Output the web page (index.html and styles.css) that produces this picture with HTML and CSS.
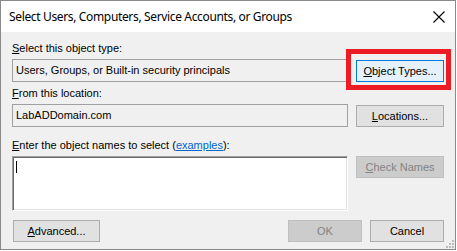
FILE: index.html
```html
<!DOCTYPE html>
<html>
<head>
<meta charset="utf-8">
<link rel="stylesheet" href="styles.css">
</head>
<body>
<div class="window">
  <div class="titlebar">
    <span class="title">Select Users, Computers, Service Accounts, or Groups</span>
    <svg class="close" width="12" height="12" viewBox="0 0 12 12"><path d="M0.5 0.5 L11.5 11.5 M11.5 0.5 L0.5 11.5" stroke="#000" stroke-width="1.1" fill="none"/></svg>
  </div>
  <div class="content">
    <div class="label l1"><u>S</u>elect this object type:</div>
    <div class="row">
      <div class="field">Users, Groups, or Built-in security principals</div>
      <button class="btn default"><u>O</u>bject Types...</button>
    </div>
    <div class="label l2"><u>F</u>rom this location:</div>
    <div class="row">
      <div class="field">LabADDomain.com</div>
      <button class="btn"><u>L</u>ocations...</button>
    </div>
    <div class="label l3"><u>E</u>nter the object names to select (<span class="link">examples</span>):</div>
    <div class="row top">
      <div class="textarea"><span class="caret"></span></div>
      <button class="btn disabled"><u>C</u>heck Names</button>
    </div>
    <div class="bottom">
      <button class="btn adv"><u>A</u>dvanced...</button>
      <div class="spacer"></div>
      <button class="btn small disabled">OK</button>
      <button class="btn small">Cancel</button>
    </div>
  </div>
  <div class="highlight"></div>
  <div class="grip">
    <i class="d1"></i><i class="d2"></i><i class="d3"></i><i class="d4"></i><i class="d5"></i><i class="d6"></i>
  </div>
</div>
</body>
</html>
```

FILE: styles.css
```css
html, body {
  margin: 0;
  padding: 0;
  background: #ffffff;
}
.window {
  position: relative;
  width: 456px;
  height: 250px;
  box-sizing: border-box;
  border: 1px solid #8a8a8a;
  background: #f0f0f0;
  font-family: "Liberation Sans", Arial, sans-serif;
  font-size: 11px;
  color: #000;
  overflow: hidden;
}
.titlebar {
  height: 31px;
  background: #ffffff;
  display: flex;
  align-items: center;
  padding-left: 8px;
  padding-right: 8px;
}
.title {
  font-family: "Noto Sans", sans-serif;
  font-size: 12px;
  letter-spacing: -0.35px;
  flex: 1;
}
.close {
  margin-right: 2px;
  margin-top: 1px;
}
.content {
  padding: 0 11px 0 11px;
  display: flex;
  flex-direction: column;
}
.label {
  line-height: 13px;
  height: 13px;
}
.l1 { margin-top: 10px; margin-bottom: 4px; }
.l2 { margin-top: 5px; margin-bottom: 4px; }
.l3 { margin-top: 12px; margin-bottom: 4px; }
.row {
  display: flex;
  align-items: center;
  gap: 8px;
}
.row.top { align-items: flex-start; }
.field {
  flex: 1;
  height: 23px;
  box-sizing: border-box;
  border: 1px solid #a0a0a0;
  background: #f0f0f0;
  padding-left: 3px;
  line-height: 21px;
}
.textarea {
  flex: 1;
  height: 55px;
  box-sizing: border-box;
  border-top: 1px solid #a0a0a0;
  border-left: 1px solid #a0a0a0;
  border-right: 1px solid #ffffff;
  border-bottom: 1px solid #ffffff;
  box-shadow: inset 1px 1px 0 #696969, inset -1px -1px 0 #e3e3e3;
  background: #ffffff;
  position: relative;
}
.caret {
  position: absolute;
  left: 3px;
  top: 4px;
  width: 1px;
  height: 12px;
  background: #000;
}
.btn {
  font-family: "Liberation Sans", Arial, sans-serif;
  font-size: 11px;
  color: #000;
  width: 88px;
  height: 22px;
  box-sizing: border-box;
  border: 1px solid #adadad;
  background: #e1e1e1;
  padding: 0;
  margin: 0;
  flex: none;
}
.btn.default {
  border-color: #0078d7;
  background: #e5f1fb;
}
.btn.disabled {
  border-color: #bfbfbf;
  background: #cccccc;
  color: #838383;
}
.btn.small { width: 74px; }
.bottom {
  display: flex;
  gap: 8px;
  margin-top: 9px;
}
.btn.adv { margin-left: 1px; width: 87px; }
.spacer { flex: 1; }
.link {
  color: #0066cc;
  text-decoration: underline;
}
.highlight {
  position: absolute;
  left: 345px;
  top: 48px;
  width: 105px;
  height: 41px;
  box-sizing: border-box;
  border: 5px solid #ed1c24;
}
.grip {
  position: absolute;
  right: 1px;
  bottom: 1px;
  width: 8px;
  height: 8px;
}
.grip i {
  position: absolute;
  width: 2px;
  height: 2px;
  background: #bcbcbc;
}
.grip .d1 { right: 0; bottom: 6px; }
.grip .d2 { right: 0; bottom: 3px; }
.grip .d3 { right: 3px; bottom: 3px; }
.grip .d4 { right: 0; bottom: 0; }
.grip .d5 { right: 3px; bottom: 0; }
.grip .d6 { right: 6px; bottom: 0; }
```
